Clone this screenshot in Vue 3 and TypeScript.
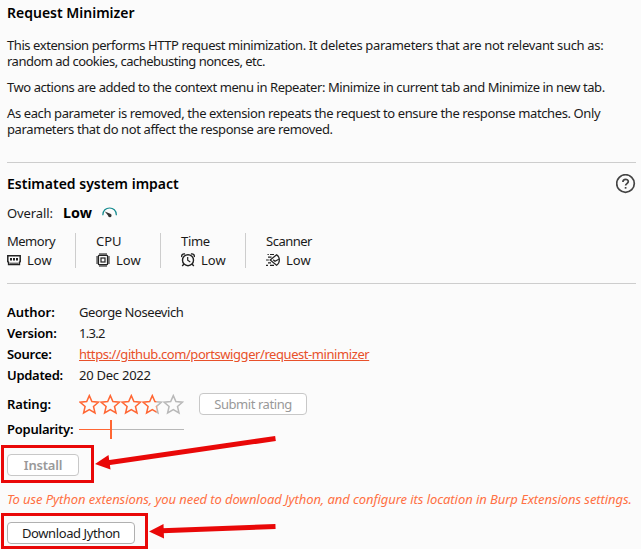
<script setup lang="ts">
interface Impact { name: string; level: string; icon: string }
interface Detail { label: string; value: string; kind: string; link?: boolean }

const impacts: Impact[] = [
  { name: 'Memory', level: 'Low', icon: 'memory' },
  { name: 'CPU', level: 'Low', icon: 'cpu' },
  { name: 'Time', level: 'Low', icon: 'time' },
  { name: 'Scanner', level: 'Low', icon: 'scanner' },
]
const details: Detail[] = [
  { label: 'Author:', value: 'George Noseevich', kind: 'author' },
  { label: 'Version:', value: '1.3.2', kind: 'version' },
  { label: 'Source:', value: 'https://github.com/portswigger/request-minimizer', kind: 'source', link: true },
  { label: 'Updated:', value: '20 Dec 2022', kind: 'updated' },
]
const starFill: number[] = [1, 1, 1, 0.69, 0]
const starPath = 'M10.3 1.6 L12.9 7.6 L19.4 8.2 L14.5 12.4 L16 18.9 L10.3 15.5 L4.6 18.9 L6.1 12.4 L1.2 8.2 L7.7 7.6 Z'
</script>

<template>
  <main class="panel">
    <h1 class="title">Request Minimizer</h1>
    <section class="description">
      <p><span class="l1">This extension performs HTTP request minimization.</span><span class="l1b"> It deletes parameters that are not relevant such as:</span><br><span class="l2">random ad cookies, cachebusting nonces, etc.</span></p>
      <p><span class="l3">Two actions are added to the context menu in Repeater: Minimize in current tab and Minimize in new tab.</span></p>
      <p><span class="l4">As each parameter is removed, the extension repeats the request to ensure the response matches. Only</span><br><span class="l5">parameters that do not affect the response are removed.</span></p>
    </section>

    <section class="impact">
      <header class="impact-head">
        <h2>Estimated system impact</h2>
        <svg class="help" width="20" height="20" viewBox="0 0 20 20" fill="none" stroke="#444" stroke-width="1.7">
          <circle cx="9.5" cy="9.5" r="8.8" />
          <path d="M6.9 7.9 C6.9 4.5 12.3 4.6 12.3 7.6 C12.3 9.6 9.6 9.6 9.6 11.6" />
          <path d="M9.6 13 V14.7" />
        </svg>
      </header>
      <div class="overall">
        <span class="overall-label">Overall:</span>
        <strong>Low</strong>
        <svg width="16" height="12" viewBox="0 0 16 12" fill="none">
          <path d="M.8 8.2 C.6 -1.4 14.6 -1.4 14.4 8.2" stroke="#138a8e" stroke-width="1.2" />
          <path d="M2.8 4.6 L8.3 6.7 A1.8 1.8 0 1 1 6 8.6 Z" fill="#333" />
        </svg>
      </div>
      <div class="metrics">
        <div v-for="item in impacts" :key="item.name" class="metric" :class="item.icon">
          <span class="name">{{ item.name }}</span>
          <span class="level">
            <svg v-if="item.icon === 'memory'" width="14" height="14" viewBox="0 0 14 14" fill="none" stroke="#222">
              <path d="M.8 2.8 H13.2 V8.6 L12.4 9.4 V11.6 H1.6 V9.4 L.8 8.6 Z" stroke-width="1.5" />
              <path d="M4 5 V7.6 M7 5 V7.6 M10 5 V7.6" stroke-width="2" />
              <path d="M4 9.6 V11.5 M6 9.6 V11.5 M8 9.6 V11.5 M10 9.6 V11.5" stroke-width="1.1" />
            </svg>
            <svg v-else-if="item.icon === 'cpu'" width="14" height="14" viewBox="0 0 14 14" fill="none" stroke="#222" stroke-width="1.4">
              <rect x="2.4" y="2.4" width="9.2" height="9.2" rx=".8" />
              <rect x="5" y="5" width="4" height="4" stroke-width="1.2" />
              <path d="M4 0 V2 M6 0 V2 M8 0 V2 M10 0 V2 M4 12 V14 M6 12 V14 M8 12 V14 M10 12 V14 M0 4 H2 M0 6 H2 M0 8 H2 M0 10 H2 M12 4 H14 M12 6 H14 M12 8 H14 M12 10 H14" stroke-width="1.1" />
            </svg>
            <svg v-else-if="item.icon === 'time'" width="14" height="14" viewBox="0 0 14 14" fill="none" stroke="#222" stroke-width="1.4">
              <circle cx="7" cy="7.2" r="5.5" />
              <path d="M6.7 4 V7.3 L9.3 9" stroke-width="1.2" />
              <path d="M.8 4 C.3 1.8 1.8 .4 4 1 M10 1 C12.2 .4 13.7 1.8 13.2 4 M3 11 L1.2 13 M11 11 L12.8 13" />
            </svg>
            <svg v-else width="14" height="14" viewBox="0 0 14 14" fill="none" stroke="#222" stroke-width="1.2">
              <path d="M4.2 7 L10.6 1.8 C14.3 4.2 14.3 9.8 10.6 12.2 Z" />
              <path d="M7.2 6.8 L9 8.3 L12.8 6.2 M4 1.5 H8 M1.5 1.5 H2.8 M2 4.2 H5.5 M0 7 H2.8 M2 9.8 H5 M0 12.3 H2 M4 12.3 H8" />
            </svg>
            <span>{{ item.level }}</span>
          </span>
        </div>
      </div>
    </section>

    <dl class="details">
      <template v-for="detail in details" :key="detail.label">
        <dt :class="detail.kind + '-label'">{{ detail.label }}</dt>
        <dd :class="detail.kind"><a v-if="detail.link" class="link">{{ detail.value }}</a><template v-else>{{ detail.value }}</template></dd>
      </template>
    </dl>
    <div class="rating">
      <b>Rating:</b>
      <div class="stars">
        <svg v-for="(fill, i) in starFill" :key="i" width="21" height="21" viewBox="0 0 21 21" fill="none" stroke-width="1.5">
          <defs>
            <clipPath :id="'star' + i"><rect x="0" y="0" :width="21 * fill" height="21" /></clipPath>
            <clipPath :id="'rest' + i"><rect :x="21 * fill" y="0" :width="21 - 21 * fill" height="21" /></clipPath>
          </defs>
          <path :d="starPath" stroke="#b8b8b8" :clip-path="`url(#rest${i})`" />
          <path :d="starPath" stroke="#ff6633" :clip-path="`url(#star${i})`" />
        </svg>
      </div>
      <button class="btn submit" disabled><span>Submit rating</span></button>
    </div>
    <div class="popularity">
      <b>Popularity:</b>
      <svg class="track" width="105" height="19" viewBox="0 0 105 19">
        <rect x="33" y="9" width="72" height="1" fill="#b8b8b8" />
        <rect x="0" y="9" width="31" height="1" fill="#ff6633" />
        <rect x="31" y="0" width="2" height="19" fill="#ff6633" />
      </svg>
    </div>
    <div class="action install-row"><button class="btn install" disabled><span>Install</span></button></div>
    <p class="notice"><span>To use Python extensions, you need to download Jython, and configure its location in Burp Extensions settings.</span></p>
    <div class="action download-row"><button class="btn download"><span>Download Jython</span></button></div>

    <svg class="annotations" width="641" height="549" viewBox="0 0 641 549">
      <g fill="none" stroke="#e90808">
        <rect x="2.5" y="446.5" width="90" height="35" stroke-width="3" />
        <rect x="2.5" y="514.5" width="144" height="33" stroke-width="3" />
        <path d="M275.5 438.5 L108 462.7 M275.5 526.5 L162 530.7" stroke-width="5" />
      </g>
      <path d="M95 464 L108.5 455 L110.5 469.5 Z M149 531.5 L163.5 524 L164 538.5 Z" fill="#e90808" />
    </svg>
  </main>
</template>

<style>
body { background: #fbfbfb; overflow: hidden; }
</style>
<style scoped>
.panel { position: relative; box-sizing: border-box; width: 641px; height: 549px; padding: 3px 5px 0 7px; overflow: hidden; background: #fbfbfb; color: #1a1a1a; font: 13px/16px "Noto Sans", sans-serif; white-space: nowrap; }
h1, h2, p, dl, dt, dd { margin: 0; }
h1, h2 { font-size: 14px; line-height: 20px; font-weight: 600; color: #000; }
.title { height: 34px; }
.description { display: flex; flex-direction: column; gap: 10px; height: 125px; }
.l1 { letter-spacing: -.43px; }
.l1b { letter-spacing: -.32px; }
.l2 { letter-spacing: -.51px; }
.l3 { letter-spacing: -.435px; }
.l4 { letter-spacing: -.395px; }
.l5 { letter-spacing: -.39px; }
.impact { box-sizing: border-box; height: 122px; border-top: 1px solid #cdcdcd; border-bottom: 1px solid #cdcdcd; }
.impact-head { display: flex; justify-content: space-between; height: 41px; padding-top: 11px; box-sizing: border-box; }
.overall { display: flex; align-items: center; height: 18px; }
.overall-label { width: 56px; letter-spacing: -.1px; }
.overall strong { width: 39px; font-size: 14.3px; font-weight: 700; letter-spacing: .1px; color: #000; }
.metrics { display: flex; height: 35px; margin-top: 11px; }
.metric { display: flex; flex-direction: column; gap: 3px; box-sizing: border-box; width: 85px; padding-left: 20px; border-right: 1px solid #cdcdcd; }
.memory { width: 69px; padding-left: 0; }
.scanner { border-right: 0; }
.memory .name, .scanner .name { letter-spacing: -.5px; }
.time .name { letter-spacing: -.3px; }
.level { display: flex; align-items: center; gap: 6px; }
.details { display: grid; grid-template-columns: 72px 1fr; grid-auto-rows: 21px; padding-top: 20px; height: 87px; }
dt, b { font-weight: 600; color: #000; }
.author { letter-spacing: -.43px; }
.version { letter-spacing: -.7px; }
.source { letter-spacing: -.43px; }
.updated { letter-spacing: -.25px; }
.version-label { letter-spacing: -.2px; }
.source-label { letter-spacing: -.3px; }
.updated-label { letter-spacing: -.3px; }
.link { color: #e8502a; text-decoration: underline; }
.rating, .popularity { display: flex; align-items: center; }
.rating b, .popularity b { width: 72px; }
.rating b { letter-spacing: -.15px; }
.rating { height: 26px; }
.stars { display: flex; width: 120px; }
.btn { box-sizing: border-box; height: 22px; padding: 0; border: 1px solid #b0b0b0; border-radius: 4px; background: #fff; color: #1a1a1a; font: 13px/18px "Noto Sans", sans-serif; }
.btn:disabled { color: #999; border-color: #c8c8c8; }
.submit { width: 108px; letter-spacing: -.43px; }
.btn.install { width: 72px; font-weight: 600; letter-spacing: -.2px; }
.download { width: 128px; letter-spacing: -.4px; }
.popularity { height: 25px; }
.popularity b { letter-spacing: -.25px; padding-bottom: 1px; }
.action { height: 22px; }
.install-row { margin-top: 12px; }
.notice { margin: 15px 0; font-style: italic; letter-spacing: -.07px; color: #ff7043; }
.annotations { position: absolute; left: 0; top: 0; pointer-events: none; }
</style>
